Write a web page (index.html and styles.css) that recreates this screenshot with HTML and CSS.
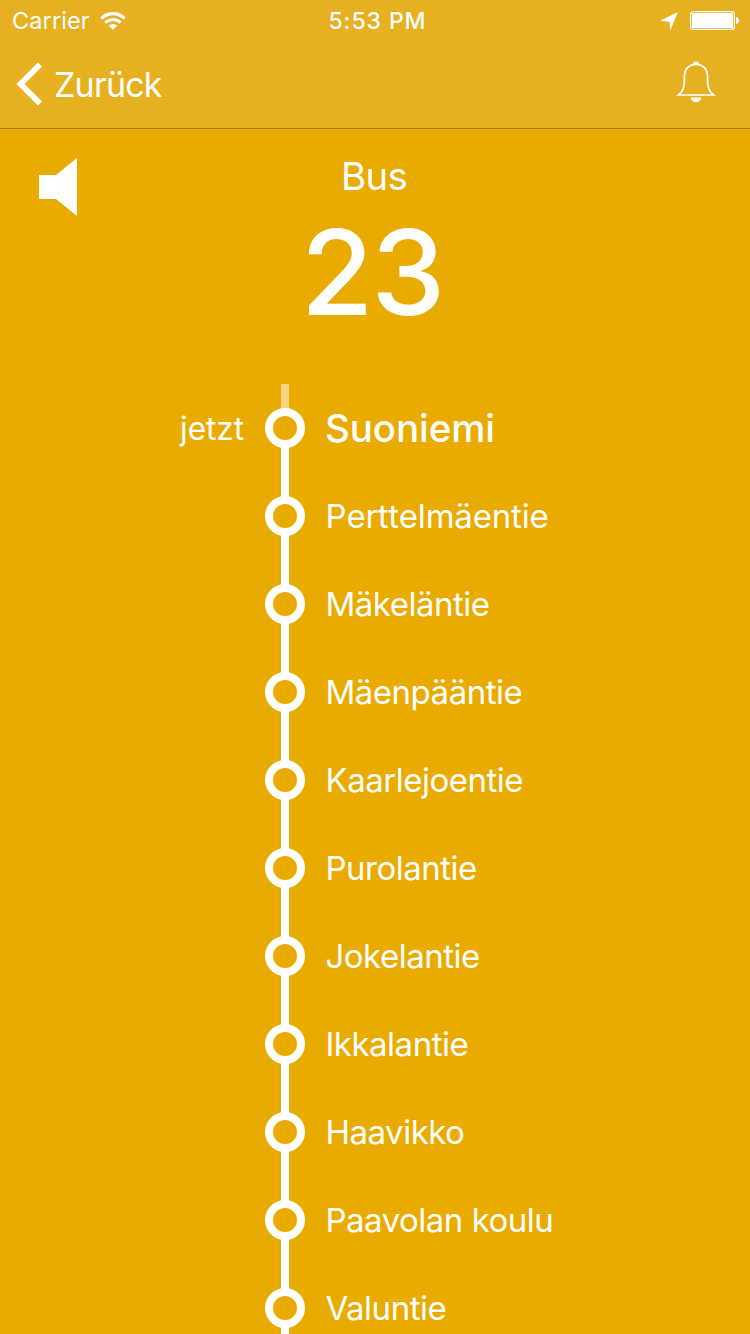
FILE: index.html
```html
<!DOCTYPE html>
<html lang="de">
<head>
<meta charset="utf-8">
<title>Bus 23</title>
<link rel="stylesheet" href="styles.css">
</head>
<body>
<div class="screen">
  <header class="top">
    <div class="status">
      <div class="status-left">
        <span class="carrier">Carrier</span>
        <svg class="wifi" width="26" height="18" viewBox="0 0 26 18" fill="none" stroke="#fff" stroke-width="3.1"><path d="M1.3 6.6C8-.1 18-.1 24.700 6.600"/><path d="M5.300 10.700c4.400-4.300 11-4.300 15.400 0"/><path d="M8.700 13.700a6.100 6.100 0 0 1 8.600 0L13 18z" fill="#fff" stroke="none"/></svg>
      </div>
      <span class="clock">5:53 PM</span>
      <div class="status-right">
        <svg width="20" height="20" viewBox="0 0 20 20" fill="#fff"><path d="M19 1 11.300 19.300 10.500 10.700 1 9.700z"/></svg>
        <svg width="50" height="20" viewBox="0 0 50 20"><rect x=".6" y=".6" width="43.800" height="17.800" rx="3" fill="none" stroke="#fff" stroke-width="1.200"/><rect x="2" y="2" width="41" height="15" rx="1.500" fill="#fff"/><path d="M46 6c1.700.2 3 1.500 3 3.500s-1.300 3.300-3 3.500z" fill="#fff"/></svg>
      </div>
    </div>
    <nav class="nav">
      <a class="back">
        <svg width="28" height="44" viewBox="0 0 28 44" fill="none" stroke="#fff" stroke-width="5.800"><path d="M24 2.500 4.500 22 24 41.500"/></svg>
        <span class="back-label">Zurück</span>
      </a>
      <svg class="bell" width="40" height="42" viewBox="0 0 40 42"><path d="M2.500 34C7 30.500 8.400 27 8.400 20v-4C8.400 8.500 12.500 3.300 20 3.300S31.600 8.500 31.600 16v4c0 7 1.400 10.500 5.900 14z" fill="none" stroke="#fff" stroke-width="1.700"/><path d="M17 3.200a3 2.700 0 0 1 6 0zM14.700 36.500h10.600c-.5 3-2.500 4.700-5.300 4.700s-4.800-1.700-5.300-4.700z" fill="#fff"/></svg>
    </nav>
  </header>
  <section class="hero">
    <svg class="speaker" width="38" height="58" viewBox="0 0 38 58" fill="#fff"><path d="M0 17h17L38 0v58L17 41H0z"/></svg>
    <div class="line">
      <div class="kind">Bus</div>
      <div class="number">23</div>
    </div>
  </section>
  <ol class="stops">
    <li class="stop current"><span class="time">jetzt</span><span class="rail"><i class="ring"></i></span><span class="name">Suoniemi</span></li>
    <li class="stop"><span class="time"></span><span class="rail"><i class="ring"></i></span><span class="name unkerned">Perttelmäentie</span></li>
    <li class="stop"><span class="time"></span><span class="rail"><i class="ring"></i></span><span class="name">Mäkeläntie</span></li>
    <li class="stop"><span class="time"></span><span class="rail"><i class="ring"></i></span><span class="name">Mäenpääntie</span></li>
    <li class="stop"><span class="time"></span><span class="rail"><i class="ring"></i></span><span class="name">Kaarlejoentie</span></li>
    <li class="stop"><span class="time"></span><span class="rail"><i class="ring"></i></span><span class="name">Purolantie</span></li>
    <li class="stop"><span class="time"></span><span class="rail"><i class="ring"></i></span><span class="name">Jokelantie</span></li>
    <li class="stop"><span class="time"></span><span class="rail"><i class="ring"></i></span><span class="name">Ikkalantie</span></li>
    <li class="stop"><span class="time"></span><span class="rail"><i class="ring"></i></span><span class="name">Haavikko</span></li>
    <li class="stop"><span class="time"></span><span class="rail"><i class="ring"></i></span><span class="name">Paavolan koulu</span></li>
    <li class="stop"><span class="time"></span><span class="rail"><i class="ring"></i></span><span class="name">Valuntie</span></li>
  </ol>
</div>
</body>
</html>
```
FILE: styles.css
```css
* { box-sizing: border-box; }
body { margin: 0; background: #e9ab00; }
svg { display: block; flex: none; }
.screen {
  width: 750px;
  height: 1334px;
  overflow: hidden;
  background: #e9ab00;
  color: #fff;
  font-family: Inter, "Liberation Sans", sans-serif;
  font-weight: 400;
  font-variant-ligatures: none;
  white-space: nowrap;
}
.top { height: 129px; background: #e6b020; border-bottom: 1px solid #a37d12; }
.status {
  display: grid;
  grid-template-columns: 1fr auto 1fr;
  align-items: center;
  height: 40px;
  padding: 1px 10px 0 12px;
}
.status-left { display: flex; align-items: center; gap: 10px; }
.carrier { width: 78px; font-size: 23.500px; line-height: 40px; letter-spacing: 0.1px; }
.clock { padding-left: 3px; font-size: 23px; font-weight: 500; line-height: 40px; letter-spacing: 0.9px; }
.status-right { display: flex; align-items: center; justify-content: flex-end; gap: 11px; }
.nav {
  display: flex;
  align-items: center;
  justify-content: space-between;
  height: 88px;
  padding: 0 34px 0 16px;
}
.back { display: flex; align-items: center; gap: 10px; }
.back-label { padding-top: 1px; font-size: 34px; line-height: 44px; letter-spacing: -0.8px; }
.bell { margin-bottom: 5px; }
.hero {
  display: grid;
  grid-template-columns: 38px 1fr 38px;
  height: 255px;
  padding: 29px 39px 0;
}
.line { text-align: center; }
.kind { padding-right: 2px; font-size: 38.500px; line-height: 37px; letter-spacing: -0.7px; }
.number { margin-top: 17px; padding-right: 6px; font-size: 118px; font-weight: 500; line-height: 120px; letter-spacing: -2px; }
.stops { margin: 0; padding: 0; list-style: none; }
.stop {
  display: grid;
  grid-template-columns: 245px 40px 1fr;
  column-gap: 20px;
  align-items: center;
  height: 88px;
}
.time { padding-right: 1px; text-align: right; font-size: 31.500px; }
.rail { display: flex; flex-direction: column; align-items: center; }
.rail::before, .rail::after { content: ""; width: 8px; height: 25px; background: #fff; }
.ring { width: 40px; height: 40px; margin: -1px 0; border: 8px solid #fff; border-radius: 50%; background: #e9ab00; }
.current .rail::before { background: #f5d57f; }
.name { padding-left: 0.500px; font-size: 33px; letter-spacing: -0.5px; }
.unkerned { font-kerning: none; letter-spacing: -0.2px; }
.current .name { padding-left: 0; font-size: 38.500px; font-weight: 500; letter-spacing: -0.1px; }
```
